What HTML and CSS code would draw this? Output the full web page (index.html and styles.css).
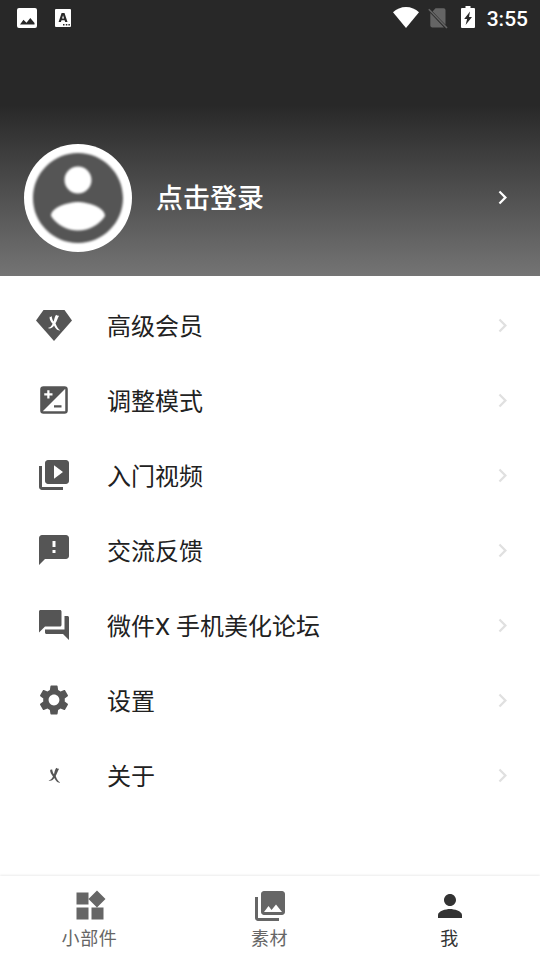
FILE: index.html
```html
<!DOCTYPE html>
<html lang="zh-CN">
<head>
<meta charset="utf-8">
<title>我</title>
<link rel="stylesheet" href="styles.css">
</head>
<body>
<svg class="defs" width="0" height="0">
  <symbol id="chevron" viewBox="0 0 24 24"><path d="M10 6L8.590 7.410 13.170 12l-4.580 4.590L10 18l6-6z"/></symbol>
  <symbol id="brand" viewBox="0 0 12 16"><path d="M3.700 1.300C4.200 3.500 4.600 5.300 5.700 6.700C6.300 4.500 6.600 2 8 .2C8.600 1 9.800 1.300 10.800 1.100C9.400 3.200 8.900 5.800 7.400 8.300C8.500 11.300 9.800 13.800 12 15C8.800 15.400 7.200 12.600 6 10.400C4.800 12.400 2.800 13.800.1 12.800C2.300 12.600 3.700 11 4.700 8.800C3 6.800 1.600 4.800 1.900 2.200C2.700 2.400 3.300 2 3.700 1.300z"/></symbol>
</svg>
<header class="hero">
  <div class="status">
    <svg class="st-image" viewBox="0 0 20 20"><path fill-rule="evenodd" d="M2 0h16a2 2 0 0 1 2 2v16a2 2 0 0 1-2 2H2a2 2 0 0 1-2-2V2A2 2 0 0 1 2 0zM3 16.500h14.500V15l-4.200-5-3.800 4.700L6.500 11.800z"/></svg>
    <svg class="st-lang" viewBox="0 0 16 18"><path fill-rule="evenodd" d="M1 0h14a1 1 0 0 1 1 1v16a1 1 0 0 1-1 1H1a1 1 0 0 1-1-1V1A1 1 0 0 1 1 0zM6.600 4L3.600 13h2.300l.6-1.800h3.100l.6 1.800h2.300L9.500 4zM8.050 6.200l1 3.300h-2zM8 15v1.500h1.500V15zM10.800 15v1.500h1.500V15zM13.400 15v1.500h1.500V15z"/></svg>
    <span class="spacer"></span>
    <svg class="st-wifi" viewBox="0 0 26 21"><path d="M13 21L0 5.200C3.500 2 8 0 13 0s9.500 2 13 5.200z"/></svg>
    <svg class="st-sim" viewBox="0 0 20 21"><path class="dim" d="M7.500.3H15.700a1.800 1.800 0 0 1 1.800 1.800V16.800L4.600 3.400zM2.300 5L16 19.400H4a1.800 1.800 0 0 1-1.700-1.800z"/><path class="slash" d="M.8 1.300L19 20"/></svg>
    <svg class="st-battery" viewBox="0 0 14 22"><path fill-rule="evenodd" d="M4.500 0h5v2H13a1 1 0 0 1 1 1v18a1 1 0 0 1-1 1H1a1 1 0 0 1-1-1V3a1 1 0 0 1 1-1h3.500zM9 5.500L3.200 13h2.900L4.600 19 11 11H8z"/></svg>
    <span class="clock">3:55</span>
  </div>
  <div class="login">
    <div class="avatar"><svg viewBox="0 0 24 24"><path d="M12 2C6.480 2 2 6.480 2 12s4.480 10 10 10 10-4.480 10-10S17.520 2 12 2zm0 3c1.660 0 3 1.340 3 3s-1.340 3-3 3-3-1.340-3-3 1.340-3 3-3zm0 14.200c-2.500 0-4.710-1.280-6-3.220.03-1.990 4-3.080 6-3.080 1.990 0 5.970 1.090 6 3.080-1.290 1.940-3.500 3.220-6 3.220z"/></svg></div>
    <span class="login-text">点击登录</span>
    <svg class="chevron light"><use href="#chevron"/></svg>
  </div>
</header>
<main class="menu">
  <div class="row"><svg class="icon" viewBox="0 0 36 36"><path d="M7.500 3h21L36 13.500 18 34 0 13.500z"/><use class="on-gem" href="#brand" x="11.500" y="7.500" width="13" height="17"/></svg><span class="label">高级会员</span><svg class="chevron"><use href="#chevron"/></svg></div>
  <div class="row"><svg class="icon" viewBox="0 0 24 24"><path d="M19 2.800H5A2.200 2.200 0 0 0 2.800 5v14A2.200 2.200 0 0 0 5 21.200h14a2.200 2.200 0 0 0 2.200-2.200V5A2.200 2.200 0 0 0 19 2.800zM5.500 7.500h2v-2H9v2h2V9H9v2H7.500V9h-2zM19.500 19.500H4.500l15-15zM17 17v-1.500h-5V17z"/></svg><span class="label">调整模式</span><svg class="chevron"><use href="#chevron"/></svg></div>
  <div class="row"><svg class="icon" viewBox="0 0 24 24"><path d="M4 6H2v14c0 1.100.9 2 2 2h14v-2H4zM20 2H8c-1.100 0-2 .9-2 2v12c0 1.100.9 2 2 2h12c1.100 0 2-.9 2-2V4c0-1.100-.9-2-2-2zm-8 12.500v-9l6 4.500z"/></svg><span class="label">入门视频</span><svg class="chevron"><use href="#chevron"/></svg></div>
  <div class="row"><svg class="icon" viewBox="0 0 24 24"><path d="M20 2H4c-1.100 0-1.990.9-1.990 2L2 22l4-4h14c1.100 0 2-.9 2-2V4c0-1.100-.9-2-2-2zm-7 12h-2v-2h2zm0-4h-2V6h2z"/></svg><span class="label">交流反馈</span><svg class="chevron"><use href="#chevron"/></svg></div>
  <div class="row"><svg class="icon" viewBox="0 0 24 24"><path d="M21 6h-2v9H6v2c0 .55.45 1 1 1h11l4 4V7c0-.55-.45-1-1-1zm-4 6V3c0-.55-.45-1-1-1H3c-.55 0-1 .45-1 1v14l4-4h10c.55 0 1-.45 1-1z"/></svg><span class="label">微件X 手机美化论坛</span><svg class="chevron"><use href="#chevron"/></svg></div>
  <div class="row"><svg class="icon" viewBox="0 0 24 24"><path d="M19.140 12.940c.04-.3.060-.61.060-.94 0-.32-.02-.64-.07-.94l2.030-1.580c.18-.14.230-.41.120-.61l-1.920-3.320c-.12-.22-.37-.29-.59-.22l-2.390.96c-.5-.38-1.030-.7-1.620-.94l-.36-2.540c-.04-.24-.24-.41-.48-.41h-3.840c-.24 0-.43.170-.47.410l-.36 2.540c-.59.240-1.130.57-1.620.94l-2.390-.96c-.22-.08-.47 0-.59.220L2.740 8.870c-.12.210-.08.470.12.610l2.030 1.580c-.05.300-.09.630-.09.940s.02.640.07.940l-2.030 1.580c-.18.140-.23.410-.12.610l1.920 3.320c.12.220.37.290.59.220l2.390-.96c.5.380 1.030.7 1.620.94l.36 2.540c.05.240.24.410.48.410h3.840c.24 0 .44-.17.47-.41l.36-2.540c.59-.24 1.130-.56 1.620-.94l2.390.96c.22.080.47 0 .59-.22l1.920-3.320c.12-.22.070-.47-.12-.61zM12 15.600c-1.980 0-3.600-1.620-3.600-3.600s1.620-3.600 3.600-3.600 3.600 1.620 3.600 3.600-1.620 3.600-3.600 3.600z"/></svg><span class="label">设置</span><svg class="chevron"><use href="#chevron"/></svg></div>
  <div class="row"><svg class="icon" viewBox="0 0 36 36"><use href="#brand" x="12.300" y="10.600" width="12" height="16"/></svg><span class="label">关于</span><svg class="chevron"><use href="#chevron"/></svg></div>
</main>
<nav class="tabs">
  <div class="tab"><svg class="icon" viewBox="0 0 24 24"><path d="M13 13v8h8v-8zM3 21h8v-8H3zM3 3v8h8V3zm13.660-1.310L11 7.340 16.660 13l5.660-5.660z"/></svg><span>小部件</span></div>
  <div class="tab"><svg class="icon" viewBox="0 0 24 24"><path d="M22 16V4c0-1.100-.9-2-2-2H8c-1.100 0-2 .9-2 2v12c0 1.100.9 2 2 2h12c1.100 0 2-.9 2-2zm-11-4l2.030 2.710L16 11l4 5H8zM2 6v14c0 1.100.9 2 2 2h14v-2H4V6z"/></svg><span>素材</span></div>
  <div class="tab active"><svg class="icon" viewBox="0 0 24 24"><path d="M12 12c2.210 0 4-1.790 4-4s-1.790-4-4-4-4 1.790-4 4 1.790 4 4 4zm0 2c-2.670 0-8 1.340-8 4v2h16v-2c0-2.660-5.330-4-8-4z"/></svg><span>我</span></div>
</nav>
</body>
</html>
```
FILE: styles.css
```css
* { box-sizing: border-box; }
body {
  margin: 0;
  width: 540px;
  height: 960px;
  display: flex;
  flex-direction: column;
  overflow: hidden;
  background: #fff;
  color: #212121;
  font-family: Roboto, "Noto Sans CJK SC", sans-serif;
}
svg { display: block; flex: none; fill: currentColor; }
.defs { position: absolute; }
.hero {
  height: 276px;
  background: linear-gradient(#282828 0, #282828 105px, #747474 276px);
  color: #fff;
}
.status {
  height: 36px;
  display: flex;
  align-items: center;
  padding: 0 12px 0 17px;
}
.st-image { width: 20px; height: 20px; }
.st-lang { width: 16px; height: 18px; margin-left: 18px; }
.spacer { flex: 1; }
.st-wifi { width: 26px; height: 21px; margin: 0 9px 2px 0; }
.st-sim { width: 20px; height: 21px; margin-right: 13px; }
.dim { fill: #656565; }
.slash { stroke: #656565; stroke-width: 1.6; }
.st-battery { width: 14px; height: 22px; margin: 0 12px 2px 0; }
.clock { font-size: 21px; font-weight: 500; line-height: 36px; padding-top: 2px; }
.login {
  display: flex;
  align-items: center;
  height: 108px;
  margin-top: 108px;
  padding: 0 24px;
}
.avatar {
  width: 108px;
  height: 108px;
  border-radius: 50%;
  background: #fff;
  color: #555;
  overflow: hidden;
}
.avatar svg { width: 108px; height: 108px; filter: blur(0.8px); }
.login-text { flex: 1; margin-left: 24px; padding-bottom: 3px; font-size: 27px; font-weight: 500; }
.chevron { width: 27px; height: 27px; color: #e0e0e0; }
.chevron.light { color: #fff; margin-bottom: 1px; }
.menu { flex: 1; padding-top: 12px; }
.row {
  display: flex;
  align-items: center;
  height: 75px;
  padding: 0 24px 0 36px;
}
.icon { width: 36px; height: 36px; color: #555; }
.row .icon { margin-bottom: 1px; }
.on-gem { fill: #fff; }
.label { flex: 1; margin-left: 35px; padding-bottom: 2px; font-size: 24px; }
.tabs {
  display: flex;
  height: 84px;
  background: #fff;
  box-shadow: 0 -1px 2px rgba(0, 0, 0, 0.08);
}
.tab {
  flex: 1;
  display: flex;
  flex-direction: column;
  align-items: center;
  padding-top: 12px;
  color: #666;
  font-size: 18px;
  line-height: 29px;
  letter-spacing: 0.6px;
}
.tab span { padding-right: 1px; }
.tab .icon { color: inherit; }
.tab.active { color: #333; }
```
